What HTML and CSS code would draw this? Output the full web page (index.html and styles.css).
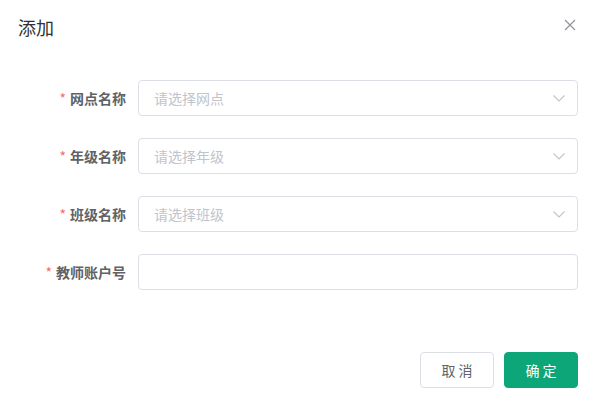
FILE: index.html
```html
<!DOCTYPE html>
<html lang="zh">
<head>
<meta charset="utf-8">
<title>添加</title>
<link rel="stylesheet" href="styles.css">
</head>
<body>
<div class="dialog">
  <div class="header">
    <span class="title">添加</span>
    <button class="close" aria-label="关闭">
      <svg width="12" height="12" viewBox="0 0 12 12"><path d="M1 1 L11 11 M11 1 L1 11" stroke="#909399" stroke-width="1.2" fill="none"/></svg>
    </button>
  </div>
  <div class="body">
    <div class="form-item">
      <label class="label"><span class="req">*</span>网点名称</label>
      <div class="input select"><span class="ph">请选择网点</span>
        <svg class="arrow" width="12" height="7" viewBox="0 0 12 7"><path d="M0.5 0.5 L6 6 L11.5 0.5" stroke="#c0c4cc" stroke-width="1.1" fill="none"/></svg>
      </div>
    </div>
    <div class="form-item">
      <label class="label"><span class="req">*</span>年级名称</label>
      <div class="input select"><span class="ph">请选择年级</span>
        <svg class="arrow" width="12" height="7" viewBox="0 0 12 7"><path d="M0.5 0.5 L6 6 L11.5 0.5" stroke="#c0c4cc" stroke-width="1.1" fill="none"/></svg>
      </div>
    </div>
    <div class="form-item">
      <label class="label"><span class="req">*</span>班级名称</label>
      <div class="input select"><span class="ph">请选择班级</span>
        <svg class="arrow" width="12" height="7" viewBox="0 0 12 7"><path d="M0.5 0.5 L6 6 L11.5 0.5" stroke="#c0c4cc" stroke-width="1.1" fill="none"/></svg>
      </div>
    </div>
    <div class="form-item">
      <label class="label"><span class="req">*</span>教师账户号</label>
      <div class="input"></div>
    </div>
  </div>
  <div class="footer">
    <button class="btn">取 消</button>
    <button class="btn primary">确 定</button>
  </div>
</div>
</body>
</html>
```
FILE: styles.css
```css
* { box-sizing: border-box; }
html, body { margin: 0; padding: 0; background: #fff; }
body {
  font-family: "Noto Sans CJK SC", "Liberation Sans", sans-serif;
  width: 596px;
  height: 408px;
  overflow: hidden;
}
.dialog { position: relative; width: 596px; height: 408px; }
.header {
  padding: 15px 18px 10px;
  height: 50px;
}
.title {
  display: block;
  font-size: 18px;
  line-height: 24px;
  color: #303133;
}
.close {
  position: absolute;
  top: 19px;
  right: 20px;
  width: 12px;
  height: 12px;
  padding: 0;
  border: 0;
  background: none;
  display: flex;
}
.body { padding: 30px 18px 40px; }
.form-item {
  display: flex;
  height: 36px;
  margin-bottom: 22px;
}
.label {
  width: 120px;
  flex: none;
  text-align: right;
  padding-right: 12px;
  font-size: 14px;
  line-height: 36px;
  font-weight: 700;
  color: #606266;
}
.req { color: #f56c6c; margin-right: 4px; font-weight: 400; }
.input {
  flex: 1;
  height: 36px;
  border: 1px solid #dcdfe6;
  border-radius: 4px;
  display: flex;
  align-items: center;
  padding: 0 15px;
}
.ph { font-size: 14px; color: #c0c4cc; flex: 1; }
.arrow { margin-right: -3px; }
.footer {
  display: flex;
  justify-content: flex-end;
  gap: 10px;
  padding: 0 18px;
}
.btn {
  width: 74px;
  height: 36px;
  border: 1px solid #dcdfe6;
  border-radius: 4px;
  background: #fff;
  color: #606266;
  font-family: inherit;
  font-size: 14px;
  line-height: 1;
  padding: 0;
}
.btn.primary {
  background: #0ca678;
  border-color: #0ca678;
  color: #fff;
}
```
